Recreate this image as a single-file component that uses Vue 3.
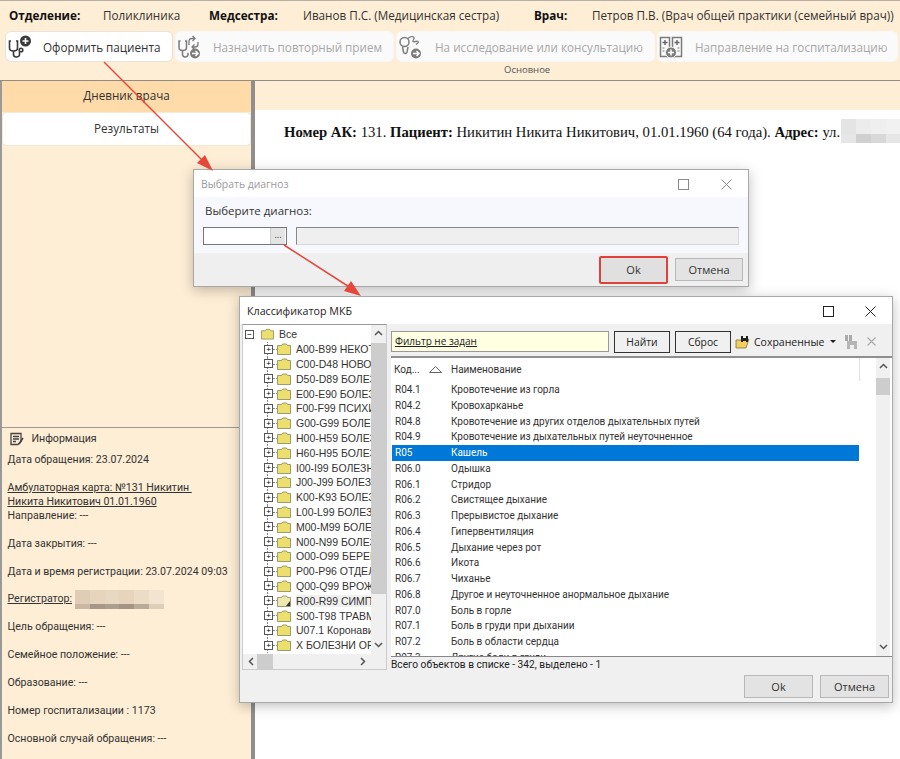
<script setup>
const treeItems = [
  'A00-B99 НЕКОТ',
  'C00-D48 НОВОО',
  'D50-D89 БОЛЕЗ',
  'E00-E90 БОЛЕЗ',
  'F00-F99 ПСИХИ',
  'G00-G99 БОЛЕЗ',
  'H00-H59 БОЛЕЗ',
  'H60-H95 БОЛЕЗ',
  'I00-I99 БОЛЕЗН',
  'J00-J99 БОЛЕЗН',
  'K00-K93 БОЛЕЗ',
  'L00-L99 БОЛЕЗН',
  'M00-M99 БОЛЕЗ',
  'N00-N99 БОЛЕЗ',
  'O00-O99 БЕРЕМ',
  'P00-P96 ОТДЕЛ',
  'Q00-Q99 ВРОЖ,',
  'R00-R99 СИМПТ',
  'S00-T98 ТРАВМ',
  'U07.1 Коронави',
  'X БОЛЕЗНИ ОР'
]

const rows = [
  ['R04.1', 'Кровотечение из горла'],
  ['R04.2', 'Кровохарканье'],
  ['R04.8', 'Кровотечение из других отделов дыхательных путей'],
  ['R04.9', 'Кровотечение из дыхательных путей неуточненное'],
  ['R05', 'Кашель'],
  ['R06.0', 'Одышка'],
  ['R06.1', 'Стридор'],
  ['R06.2', 'Свистящее дыхание'],
  ['R06.3', 'Прерывистое дыхание'],
  ['R06.4', 'Гипервентиляция'],
  ['R06.5', 'Дыхание через рот'],
  ['R06.6', 'Икота'],
  ['R06.7', 'Чиханье'],
  ['R06.8', 'Другое и неуточненное анормальное дыхание'],
  ['R07.0', 'Боль в горле'],
  ['R07.1', 'Боль в груди при дыхании'],
  ['R07.2', 'Боль в области сердца'],
  ['R07.3', 'Другие боли в груди']
]

// пиксели размытых областей
const addressBlur = ['#e4e4e4', '#ececec', '#efefef', '#f1f1f1', '#e6e6e6', '#d0d0d0', '#d8d8d8', '#e6e6e6']
const registratorBlur = [
  '#e0cdb5', '#e6d4bd', '#e8d7c1', '#e6d4bc', '#ecdcc6', '#f2e4d0',
  '#c9b7a3', '#a6978a', '#ad9e8e', '#a39486', '#b9aa99', '#ddcdb9'
]
</script>

<template>
  <div class="app">
    <header class="head">
      <b class="k1">Отделение:</b><span class="v1">Поликлиника</span>
      <b class="k2">Медсестра:</b><span class="v2">Иванов П.С. (Медицинская сестра)</span>
      <b class="k3">Врач:</b><span class="v3">Петров П.В. (Врач общей практики (семейный врач))</span>
    </header>

    <div class="ribbon">
      <button class="rb active b1">
        <svg class="ico" viewBox="0 0 24 24" fill="none" stroke="#3a3a3a" stroke-width="1.6">
          <path d="M4 6H2.500v7c0 4 8 4 8 0V6H9" />
          <path d="M6.500 16v3.500c0 3.200 6 3.200 6 .3V17" />
          <circle cx="14" cy="15" r="1.800" />
          <circle cx="18.500" cy="6" r="5.500" fill="#3a3a3a" stroke="none" />
          <path d="M18.500 3v6M15.500 6h6" stroke="#fff" stroke-width="1.600" />
        </svg>
        <span>Оформить пациента</span>
      </button>
      <button class="rb b2">
        <svg class="ico" viewBox="0 0 24 24" fill="none" stroke="#7c7c7c" stroke-width="1.500">
          <path d="M3.500 6H2v6.500c0 4 7.500 4 7.500 0V6H8" />
          <path d="M5.500 16v3.500c0 3.200 5.500 3.200 5.500.3v-2" />
          <path d="M12 10V6.500c0-2 1-3 3-3h2M15.500 1l2.500 2.500L15.500 6M21 7v2c0 2-1 3-3 3h-3M17.500 9.500L15 12l2.500 2.500" stroke-width="1.300" />
          <circle cx="18" cy="18.500" r="5" fill="#7c7c7c" stroke="none" />
          <path d="M15 18.500h6M18.500 16l2.500 2.500-2.500 2.500" stroke="#fff" stroke-width="1.400" />
        </svg>
        <span>Назначить повторный прием</span>
      </button>
      <button class="rb b3">
        <svg class="ico" viewBox="0 0 24 24" fill="none" stroke="#7c7c7c" stroke-width="1.500">
          <circle cx="6.500" cy="7" r="4.500" />
          <path d="M4.500 12l1 5c.5 2 3 2 3.500 0l1-5" />
          <path d="M10 3.500c2-2 5-2.500 6-1s-2 3-1 4 4-1 5 0-1 2-2 3" stroke-width="1.300" />
          <circle cx="18" cy="18.500" r="5" fill="#7c7c7c" stroke="none" />
          <path d="M15 18.500h6M18.500 16l2.500 2.500-2.500 2.500" stroke="#fff" stroke-width="1.400" />
        </svg>
        <span>На исследование или консультацию</span>
      </button>
      <button class="rb b4">
        <svg class="ico" viewBox="0 0 24 24" fill="none" stroke="#7c7c7c" stroke-width="1.500">
          <path d="M1.500 2.500h9v19h-9zM13.500 2.500h9v19h-9z" />
          <path d="M6 5v5M3.500 7.500h5M18 5v5M15.500 7.500h5" stroke="#666" stroke-width="1.400" />
          <path d="M3.500 13h2M3.500 16h2M18.500 13h2M18.500 16h2" stroke-width="1.200" />
          <circle cx="12" cy="17.500" r="5.500" fill="#7c7c7c" stroke="#fafafa" stroke-width="1" />
          <path d="M12 14.500v6M9 17.500h6" stroke="#fff" stroke-width="1.500" />
        </svg>
        <span>Направление на госпитализацию</span>
      </button>
      <div class="ribbon-label">Основное</div>
    </div>

    <div class="main">
      <aside class="side">
        <div class="tab-on">Дневник врача</div>
        <div class="tab-off">Результаты</div>
        <div class="side-space"></div>
        <section class="info">
          <div class="info-title">
            <svg width="14" height="14" viewBox="0 0 14 14" fill="none" stroke="#444" stroke-width="1.300">
              <path d="M1 1.500h10v8l-3 3H1z" />
              <path d="M3 4.500h6M3 7h6M3 9.500h3" />
              <path d="M13 6l-4 6" stroke-width="1.600" />
            </svg>
            <span>Информация</span>
          </div>
          <p>Дата обращения: 23.07.2024</p>
          <p class="gap"><u>Амбулаторная карта: №131 Никитин&nbsp;</u></p>
          <p><u>Никита Никитович 01.01.1960</u></p>
          <p>Направление: ---</p>
          <p class="gap">Дата закрытия: ---</p>
          <p class="gap">Дата и время регистрации: 23.07.2024 09:03</p>
          <p class="gap reg">
            <u>Регистратор:</u>
            <span class="reg-blur">
              <i v-for="(c, i) in registratorBlur" :key="i" :style="{ background: c }"></i>
            </span>
          </p>
          <p class="gap">Цель обращения: ---</p>
          <p class="gap">Семейное положение: ---</p>
          <p class="gap">Образование: ---</p>
          <p class="gap">Номер госпитализации : 1173</p>
          <p class="gap">Основной случай обращения: ---</p>
        </section>
      </aside>

      <div class="content">
        <div class="content-bar"></div>
        <div class="doc">
          <b>Номер АК:</b> 131. <b>Пациент:</b> Никитин Никита Никитович, 01.01.1960 (64 года). <b>Адрес:</b> ул.
          <span class="addr-blur">
            <i v-for="(c, i) in addressBlur" :key="i" :style="{ background: c }"></i>
          </span>
        </div>
      </div>
    </div>

    <!-- окно выбора диагноза -->
    <div class="win win-diag">
      <div class="win-title">
        <span class="muted">Выбрать диагноз</span>
        <span class="max light"></span>
        <svg class="close" width="11" height="11" viewBox="0 0 11 11" stroke="#8a8a8a"><path d="M.5.5l10 10M10.500.5l-10 10" /></svg>
      </div>
      <div class="diag-body">
        <label>Выберите диагноз:</label>
        <div class="diag-inputs">
          <div class="code-input"><span class="dots">...</span></div>
          <div class="name-input"></div>
        </div>
      </div>
      <div class="diag-foot">
        <button class="btn ok-marked">Ok</button>
        <button class="btn cancel">Отмена</button>
      </div>
    </div>

    <!-- классификатор -->
    <div class="win win-mkb">
      <div class="win-title mkb-title">
        <span>Классификатор МКБ</span>
        <span class="max"></span>
        <svg class="close" width="11" height="11" viewBox="0 0 11 11" stroke="#222"><path d="M.5.5l10 10M10.500.5l-10 10" /></svg>
      </div>
      <div class="mkb-body">
        <div class="tree">
          <div class="tree-scroll">
            <div class="tree-root">
              <span class="box">−</span>
              <svg class="folder" viewBox="0 0 14 12"><path d="M.5 2.500h4l1-1.500h4l1 1.500h3v9H.5z" fill="#ecdf6e" stroke="#85855a" stroke-width=".8" /></svg>
              <span>Все</span>
            </div>
            <div v-for="item in treeItems" :key="item" class="tree-row" :class="{ current: item.startsWith('R00') }">
              <span class="box">+</span>
              <svg class="folder" viewBox="0 0 14 12">
                <path d="M.5 2.500h4l1-1.500h4l1 1.500h3v9H.5z" :fill="item.startsWith('R00') ? '#efe9b0' : '#ecdf6e'" stroke="#85855a" stroke-width=".8" />
                <path v-if="item.startsWith('R00')" d="M9 11l4-5v5z" fill="#333" />
              </svg>
              <span class="tree-text">{{ item }}</span>
            </div>
          </div>
          <div class="vbar tree-vbar">
            <svg class="chev" width="9" height="6" viewBox="0 0 9 6"><path d="M1 5l3.500-3.500L8 5" fill="none" stroke="#555" stroke-width="1.500" /></svg>
            <div class="tree-thumb"></div>
            <svg class="chev bottom" width="9" height="6" viewBox="0 0 9 6"><path d="M1 1l3.500 3.500L8 1" fill="none" stroke="#555" stroke-width="1.500" /></svg>
          </div>
          <div class="hbar">
            <svg width="6" height="9" viewBox="0 0 6 9"><path d="M5 1L1.500 4.500 5 8" fill="none" stroke="#555" stroke-width="1.500" /></svg>
            <div class="hthumb"></div>
            <svg width="6" height="9" viewBox="0 0 6 9"><path d="M1 1l3.500 3.500L1 8" fill="none" stroke="#555" stroke-width="1.500" /></svg>
          </div>
        </div>

        <div class="right">
          <div class="filter-bar">
            <div class="filter"><u>Фильтр не задан</u></div>
            <button class="fbtn">Найти</button>
            <button class="fbtn">Сброс</button>
            <svg class="saved-ico" width="16" height="14" viewBox="0 0 16 14">
              <path d="M1 5h10l3-1-3 9H1z" fill="#f2cf5e" stroke="#7a6420" stroke-width=".7" />
              <path d="M6 1h2v6H6zM11 1h2v6h-2z" fill="#222" />
              <path d="M7 3h5v3H7z" fill="#222" />
            </svg>
            <span class="saved">Сохраненные</span>
            <i class="caret"></i>
            <svg class="save-ico" width="16" height="16" viewBox="0 0 16 16">
              <path d="M2 1h3v6H2zM6 1h3v6H6z" fill="#aaa" />
              <path d="M4 7h10v8H4z" fill="#b5b5b5" />
              <path d="M7 11h4v4H7z" fill="#eee" />
            </svg>
            <svg class="x-ico" width="9" height="9" viewBox="0 0 9 9" stroke="#aaa" stroke-width="1.100"><path d="M.5.5l8 8M8.500.5l-8 8" /></svg>
          </div>

          <div class="list-wrap">
            <div class="list">
              <div class="list-head">
                <span class="c-code">Код...</span>
                <svg class="sort" width="13" height="7" viewBox="0 0 13 7"><path d="M6.500.5L12.500 6.500H.5z" fill="none" stroke="#666" /></svg>
                <span class="c-name">Наименование</span>
              </div>
              <div class="list-rows">
                <div v-for="r in rows" :key="r[0]" class="list-row" :class="{ selected: r[0] === 'R05' }">
                  <span class="c-code">{{ r[0] }}</span>
                  <span class="c-name">{{ r[1] }}</span>
                </div>
              </div>
            </div>
            <div class="vbar list-vbar">
              <svg class="chev" width="9" height="6" viewBox="0 0 9 6"><path d="M1 5l3.500-3.500L8 5" fill="none" stroke="#555" stroke-width="1.500" /></svg>
              <div class="list-thumb"></div>
              <svg class="chev bottom" width="9" height="6" viewBox="0 0 9 6"><path d="M1 1l3.500 3.500L8 1" fill="none" stroke="#555" stroke-width="1.500" /></svg>
            </div>
          </div>
          <div class="status">Всего объектов в списке - 342, выделено - 1</div>
        </div>
      </div>
      <div class="mkb-foot">
        <button class="btn">Ok</button>
        <button class="btn">Отмена</button>
      </div>
    </div>

    <!-- стрелки поверх скриншота -->
    <svg class="arrows" width="900" height="759" viewBox="0 0 900 759">
      <g stroke="#e5483b" stroke-width="1.500" fill="#e5483b">
        <path d="M104 62L206 164" />
        <path d="M213 171L197 163 205 155z" stroke="none" />
        <path d="M284 245L354 290" />
        <path d="M361 296L344 291 351 281z" stroke="none" />
      </g>
    </svg>
  </div>
</template>

<style>
html, body { margin: 0; padding: 0; }
</style>

<style scoped>
.app {
  position: relative;
  width: 900px;
  height: 759px;
  overflow: hidden;
  display: flex;
  flex-direction: column;
  background: #feeed5;
  font-family: "Open Sans", "Noto Sans", sans-serif;
  font-size: 11.700px;
  color: #333;
  box-sizing: border-box;
  border-top: 1px solid #b5b0a8;
}
button { font-family: inherit; padding: 0; margin: 0; }

.head {
  height: 28px;
  display: flex;
  align-items: center;
  white-space: nowrap;
  flex: none;
}
.head b { color: #111; }
.k1 { margin-left: 9px; width: 94px; }
.v1 { width: 106px; }
.k2 { width: 94px; }
.v2 { width: 231px; }
.k3 { width: 58px; }

.ribbon {
  position: relative;
  flex: none;
  height: 49px;
  display: flex;
  gap: 2px;
  padding: 2px 0 0 5px;
  border-bottom: 1px solid #918c86;
}
.rb {
  height: 31px;
  display: flex;
  align-items: center;
  border: 1px solid #f8f8f8;
  border-radius: 6px;
  background: #fafafa;
  color: #a8a8a8;
  font-size: 11.700px;
  box-sizing: border-box;
}
.rb.active { background: #fff; color: #333; border-color: #e7e2da; }
.b1 { width: 168px; }
.b2 { width: 219px; }
.b3 { width: 259px; }
.b4 { width: 241px; }
.ico { width: 24px; height: 24px; margin: 0 12px 0 1px; flex: none; }
.b3 .ico { margin-right: 13px; }
.ribbon-label {
  position: absolute;
  left: 504px;
  top: 34px;
  font-size: 9.500px;
  color: #555;
}

.main { flex: 1; display: flex; min-height: 0; }
.side {
  width: 251px;
  box-sizing: border-box;
  flex: none;
  border-left: 2px solid #999;
  display: flex;
  flex-direction: column;
  text-align: center;
}
.tab-on { height: 31px; line-height: 29px; background: #fedba9; }
.tab-off {
  height: 32px;
  line-height: 30px;
  margin: 1px 1px 0;
  background: #fff;
  border-radius: 3px;
  box-shadow: 0 0 1px #bbb;
}
.side-space { height: 282px; flex: none; }
.info {
  flex: 1;
  text-align: left;
  border-top: 1px solid #a09a92;
  padding: 3px 0 0 5.500px;
  white-space: nowrap;
  font-family: Roboto, "Open Sans", sans-serif;
  font-size: 10.600px;
  line-height: 13.900px;
}
.info p { margin: 0; }
.info .gap { margin-top: 14px; }
.info-title {
  display: flex;
  align-items: center;
  gap: 8px;
  height: 16px;
  padding-left: 2px;
  margin-bottom: 6px;
}
.reg { display: flex; align-items: center; height: 13.900px; }
.reg-blur {
  display: grid;
  grid-template-columns: repeat(6, 1fr);
  grid-template-rows: 14px 5px;
  flex: none;
  width: 89px;
  margin-left: 3px;
}
.reg-blur i { display: block; }

.content { flex: 1; border-left: 4px solid #8f8f8f; background: #fff; min-width: 0; }
.content-bar { height: 29px; background: #feeed5; }
.doc {
  position: relative;
  margin: 12px 0 0 29px;
  white-space: nowrap;
  font-family: "Liberation Serif", serif;
  font-size: 14.700px;
  color: #111;
  line-height: 20px;
}
.addr-blur {
  position: absolute;
  left: 557px;
  top: -3px;
  display: grid;
  grid-template-columns: repeat(4, 1fr);
  grid-template-rows: 15px 9px;
  width: 60px;
}
.addr-blur i { display: block; }

.win {
  position: absolute;
  box-sizing: border-box;
  display: flex;
  flex-direction: column;
  background: #f0f0f0;
  border: 1px solid #a8a8a8;
  box-shadow: 0 3px 12px rgba(0, 0, 0, 0.25);
}
.win-title {
  display: flex;
  align-items: center;
  flex: none;
  height: 27px;
  background: #fff;
  padding-left: 7px;
  position: relative;
  font-size: 10.400px;
}
.muted { color: #9b9b9b; }
.max {
  position: absolute;
  width: 9px;
  height: 9px;
  border: 1px solid #222;
}
.max.light { border-color: #8a8a8a; right: 59px; top: 9px; }
.close { position: absolute; right: 16px; top: 9px; }
.btn {
  width: 69px;
  height: 23px;
  background: #e3e3e3;
  border: 1px solid #b8b8b8;
  font-size: 11px;
  color: #333;
}
.btn.cancel { width: 68px; }

.win-diag { left: 193px; top: 168px; width: 556px; height: 118px; }
.diag-body { height: 56px; flex: none; background: #f7f8fd; padding: 6px 0 0 11px; box-sizing: border-box; font-size: 11.500px; }
.diag-body label { display: block; height: 24px; line-height: 16px; }
.diag-inputs { display: flex; margin-left: -2px; }
.code-input {
  position: relative;
  width: 84px;
  height: 18px;
  box-sizing: border-box;
  background: #fff;
  border: 1px solid #777;
}
.dots {
  position: absolute;
  right: 1px;
  top: 0;
  width: 14px;
  height: 16px;
  background: #e4e4e4;
  border-left: 1px solid #ccc;
  text-align: center;
  font-size: 9px;
  line-height: 14px;
}
.name-input {
  margin-left: 9px;
  width: 443px;
  height: 18px;
  box-sizing: border-box;
  background: #efefef;
  border: 1px solid #d8d8d8;
  border-top: 1px solid #888;
  border-left: 1px solid #888;
}
.diag-foot {
  flex: 1;
  display: flex;
  justify-content: flex-end;
  align-items: center;
  gap: 7px;
  padding-right: 5px;
  background: #efefef;
}
.ok-marked {
  box-sizing: content-box;
  width: 65px;
  height: 24px;
  border: 2px solid #e2413a;
  border-radius: 2px;
  background: #e0e0e0;
}

.win-mkb { left: 239px; top: 295px; width: 654px; height: 407px; }
.mkb-title { color: #222; font-size: 10.700px; }
.mkb-title .max { right: 58px; top: 9px; }
.mkb-body { display: flex; flex: none; height: 346px; padding-left: 2px; }

.tree {
  position: relative;
  width: 145px;
  flex: none;
  background: #fff;
  border: 1px solid #ccc;
  border-top-color: #999;
  box-sizing: border-box;
  display: grid;
  grid-template-columns: 1fr 15px;
  grid-template-rows: 1fr 15px;
  font-family: "Liberation Sans", Arial, sans-serif;
  font-size: 10.500px;
  color: #333;
  overflow: hidden;
}
.tree-scroll { overflow: hidden; padding-top: 2px; min-width: 0; }
.tree-root, .tree-row {
  display: flex;
  align-items: center;
  height: 14.800px;
  white-space: nowrap;
  position: relative;
}
.tree-root { padding-left: 2px; }
.tree-row { padding-left: 21px; }
.tree-row::before {
  content: "";
  position: absolute;
  left: 24px;
  top: 0;
  bottom: 0;
  border-left: 1px dotted #888;
}
.tree-row::after {
  content: "";
  position: absolute;
  left: 30px;
  width: 4px;
  top: 7px;
  border-top: 1px dotted #888;
}
.tree-row.current .tree-text { background: #f0f0f0; }
.box {
  position: relative;
  z-index: 1;
  width: 7px;
  height: 7px;
  border: 1px solid #555;
  background: #fff;
  font-size: 8px;
  line-height: 7px;
  text-align: center;
  flex: none;
  color: #000;
  margin-right: 2px;
}
.folder { width: 14px; height: 12px; flex: none; margin: 0 5px 0 2px; }
.tree-root .folder { width: 13px; margin-left: 5px; margin-right: 5px; }
.tree-text { flex: 1; overflow: hidden; }

.vbar {
  display: flex;
  flex-direction: column;
  align-items: center;
  background: #f0f0f0;
}
.chev { flex: none; margin: 5px 0; }
.chev.bottom { margin-top: auto; margin-bottom: 6px; }
.tree-thumb { flex: none; height: 251px; width: 100%; background: #cdcdcd; margin-top: 2px; }
.hbar {
  grid-column: 1 / 3;
  display: flex;
  align-items: center;
  background: #f0f0f0;
  padding: 0 5px;
  justify-content: space-between;
  position: relative;
}
.hthumb {
  position: absolute;
  left: 14px;
  top: 0;
  width: 16px;
  height: 100%;
  background: #cdcdcd;
}
.hbar svg:last-child { margin-right: 15px; }

.right { flex: 1; min-width: 0; display: flex; flex-direction: column; padding-left: 4px; }
.filter-bar {
  flex: none;
  height: 34px;
  display: flex;
  align-items: center;
  box-sizing: border-box;
  border-bottom: 2px solid #8f8f8f;
  padding-top: 5px;
  padding-bottom: 2px;
}
.filter {
  width: 218px;
  height: 21px;
  box-sizing: border-box;
  background: #ffffe1;
  border: 1px solid #999;
  line-height: 19px;
  padding-left: 3px;
  font-size: 10px;
  color: #222;
}
.fbtn {
  width: 56px;
  height: 22px;
  margin-left: 5px;
  background: #f0f0f0;
  border: 1px solid #333;
  font-size: 10.300px;
  color: #222;
}
.saved-ico { margin: 0 3px 0 4px; flex: none; }
.saved { font-size: 10.500px; color: #222; white-space: nowrap; }
.caret {
  margin-left: 6px;
  border: 3px solid transparent;
  border-top: 3px solid #222;
  border-bottom: 0;
}
.save-ico { margin-left: 7px; flex: none; }
.x-ico { margin-left: 8px; flex: none; }

.list-wrap { flex: none; height: 299px; display: flex; background: #fff; border-bottom: 1px solid #888; box-sizing: border-box; }
.list { width: 484px; flex: none; overflow: hidden; font-family: Roboto, "Liberation Sans", sans-serif; font-size: 10px; color: #333; }
.list-head {
  position: relative;
  height: 23px;
  display: flex;
  align-items: center;
  padding-left: 3px;
  width: 469px;
  border-right: 1px solid #e0e0e0;
  box-sizing: border-box;
}
.list-head .c-code { width: 36px; }
.list-head .c-name { margin-left: -1px; }
.sort { margin-left: -1px; margin-right: 10px; flex: none; }
.list-rows { padding-top: 1px; }
.list-row {
  height: 15.750px;
  line-height: 15.750px;
  display: flex;
  width: 467px;
  margin-left: 1px;
  white-space: nowrap;
  padding-left: 3px;
  box-sizing: border-box;
}
.list-row .c-code { width: 56px; flex: none; }
.list-row.selected { background: #0078d7; color: #fff; }
.list-vbar {
  width: 14px;
  margin-left: 1px;
  position: relative;
  height: 298px;
}
.list-thumb { width: 100%; height: 17px; margin-top: 4px; background: #cdcdcd; }
.status {
  height: 14px;
  line-height: 15px;
  font-size: 10.200px;
  font-family: Roboto, "Liberation Sans", sans-serif;
  color: #222;
  white-space: nowrap;
}

.mkb-foot {
  flex: 1;
  display: flex;
  justify-content: flex-end;
  align-items: center;
  gap: 7px;
  padding-right: 3px;
}

.arrows { position: absolute; left: 0; top: -1px; pointer-events: none; }
</style>
